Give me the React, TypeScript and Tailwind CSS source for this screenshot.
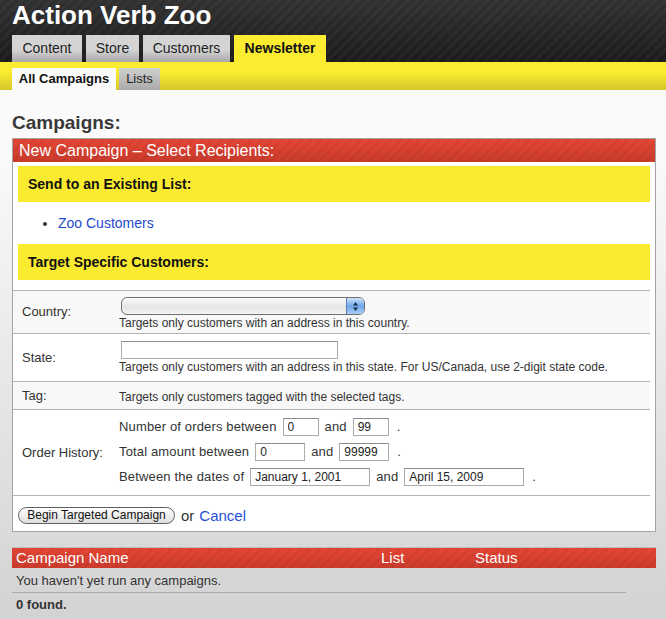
import React from 'react';

const tabs = [
  { label: 'Content', width: 'w-[70px]' },
  { label: 'Store', width: 'w-[53px]' },
  { label: 'Customers', width: 'w-[87px]' },
];

function TextBox({ value, width }: { value: string; width: string }) {
  return (
    <input
      readOnly
      defaultValue={value}
      className={`${width} h-[18px] border border-[#ababab] border-t-[#8c8c8c] bg-white px-[4px] text-[12px] tracking-normal text-[#222] outline-none`}
    />
  );
}

function FakeSelect() {
  return (
    <div className="ml-[2px] flex h-[18px] w-[244px] justify-end overflow-hidden rounded-[6px] border border-[#6f6f6f] bg-[linear-gradient(#fdfdfd,#e4e4e4_55%,#f4f4f4)]">
      <div className="flex w-[18px] items-center justify-center border-l border-[#5a80b8] bg-[linear-gradient(#cfe3fa,#6ea6ea_50%,#a9cdf6)]">
        <svg width="7" height="11" viewBox="0 0 7 11">
          <path d="M3.5 1 L6 4.5 L1 4.5 Z" fill="#1b2a44" />
          <path d="M3.5 10 L6 6.5 L1 6.5 Z" fill="#1b2a44" />
        </svg>
      </div>
    </div>
  );
}

export default function App() {
  return (
    <div className="min-h-[619px] bg-[linear-gradient(#fafafa_25%,#d3d3d3)] font-['Liberation_Sans',Arial,sans-serif] text-[#333]">
      {/* top bar */}
      <header className="flex h-[62px] flex-col bg-[repeating-linear-gradient(135deg,rgba(255,255,255,0.03)_0px,rgba(255,255,255,0.03)_3px,transparent_3px,transparent_7px),linear-gradient(#313131,#1b1b1b)] px-3">
        <div className="h-[35px] pt-[2px] text-[26px] font-bold leading-[26px] text-white">
          Action Verb Zoo
        </div>
        <nav className="flex h-[27px] gap-[4px]">
          {tabs.map((t) => (
            <div
              key={t.label}
              className={`${t.width} flex items-center justify-center bg-[linear-gradient(#d4d4d4_55%,#a8a8a8)] text-[14px] text-[#222]`}
            >
              {t.label}
            </div>
          ))}
          <div className="flex w-[92px] items-center justify-center bg-[#fbec31] text-[14px] font-bold text-[#111]">
            Newsletter
          </div>
        </nav>
      </header>

      <div className="flex h-[28px] items-end gap-[3px] bg-[linear-gradient(#fbec31_35%,#d6c62a)] px-3">
        <div className="flex h-[22px] w-[104px] items-center justify-center bg-[#fafafa] text-[13px] font-bold text-[#111]">
          All Campaigns
        </div>
        <div className="flex h-[22px] w-[41px] items-center justify-center bg-[linear-gradient(#d0d0d0,#a9a9a9)] text-[13px] text-[#222]">
          Lists
        </div>
      </div>

      <main className="pl-3 pr-[10px]">
        <h2 className="mt-[22px] mb-[4px] text-[19px] font-bold leading-[22px] text-[#383838]">
          Campaigns:
        </h2>

        <div className="border border-[#a3a3a3] bg-white">
          <div className="flex h-[23px] items-center bg-[repeating-linear-gradient(135deg,rgba(0,0,0,0.045)_0px,rgba(0,0,0,0.045)_3px,transparent_3px,transparent_7px),linear-gradient(#e54634,#c93b2c)] pl-[6px] text-[16px] text-white">
            New Campaign – Select Recipients:
          </div>

          <div className="mx-[5px]">
            <div className="mt-[4px] flex h-[36px] items-center bg-[#faeb30] pl-[10px] text-[14px] font-bold text-[#111]">
              Send to an Existing List:
            </div>
            <ul className="my-[12px] list-disc pl-[40px] text-[14px] leading-[18px]">
              <li>
                <a href="#" className="text-[#2449cf]">
                  Zoo Customers
                </a>
              </li>
            </ul>
            <div className="flex h-[36px] items-center bg-[#faeb30] pl-[10px] text-[14px] font-bold text-[#111]">
              Target Specific Customers:
            </div>
          </div>

          <div className="mt-[10px] mr-[5px] border-t border-[#b3b3b3] text-[13px]">
            <div className="flex border-b border-[#b3b3b3] bg-[#f8f8f8]">
              <div className="flex w-[106px] items-center pl-[9px]">Country:</div>
              <div className="pt-[6px] pb-[3px]">
                <FakeSelect />
                <div className="mt-[1px] text-[12px] leading-[14px]">
                  Targets only customers with an address in this country.
                </div>
              </div>
            </div>

            <div className="flex border-b border-[#b3b3b3] bg-white">
              <div className="flex w-[106px] items-center pl-[9px]">State:</div>
              <div className="pt-[7px] pb-[7px]">
                <div className="ml-[2px] flex">
                  <TextBox value="" width="w-[217px]" />
                </div>
                <div className="mt-[1px] text-[12px] leading-[14px]">
                  Targets only customers with an address in this state. For US/Canada, use 2-digit state code.
                </div>
              </div>
            </div>

            <div className="flex h-[28px] border-b border-[#b3b3b3] bg-[#f8f8f8]">
              <div className="flex w-[106px] items-center pl-[9px]">Tag:</div>
              <div className="flex items-center pt-[3px] text-[12px]">
                Targets only customers tagged with the selected tags.
              </div>
            </div>

            <div className="flex border-b border-[#b3b3b3] bg-white">
              <div className="flex w-[106px] items-center pl-[9px]">Order History:</div>
              <div className="flex flex-col gap-[7px] pt-[8px] pb-[9px] tracking-[0.15px]">
                <div className="flex h-[18px] items-center gap-[6px]">
                  <span>Number of orders between</span>
                  <TextBox value="0" width="w-[36px]" />
                  <span>and</span>
                  <TextBox value="99" width="w-[36px]" />
                  <span className="ml-[2px]">.</span>
                </div>
                <div className="flex h-[18px] items-center gap-[6px]">
                  <span>Total amount between</span>
                  <TextBox value="0" width="w-[50px]" />
                  <span>and</span>
                  <TextBox value="99999" width="w-[50px]" />
                  <span className="ml-[2px]">.</span>
                </div>
                <div className="flex h-[18px] items-center gap-[6px]">
                  <span>Between the dates of</span>
                  <TextBox value="January 1, 2001" width="w-[120px]" />
                  <span>and</span>
                  <TextBox value="April 15, 2009" width="w-[120px]" />
                  <span className="ml-[2px]">.</span>
                </div>
              </div>
            </div>
          </div>

          <div className="flex h-[35px] items-center pt-[4px] pl-[5px]">
            <button className="h-[17px] w-[157px] rounded-full border border-[#5e5e5e] bg-[linear-gradient(#ffffff,#dedede)] text-[12px] leading-[15px] text-[#111]">
              Begin Targeted Campaign
            </button>
            <span className="ml-[6px] text-[15px] leading-[17px] text-[#333]">or</span>
            <a href="#" className="ml-[5px] text-[15px] leading-[17px] text-[#1f4fd6]">
              Cancel
            </a>
          </div>
        </div>

        <div className="mt-[15px] border-t border-[#bdbdbd]">
          <div className="flex h-[20px] items-center bg-[repeating-linear-gradient(135deg,rgba(0,0,0,0.045)_0px,rgba(0,0,0,0.045)_3px,transparent_3px,transparent_7px),linear-gradient(#e54634,#cc3c2d)] text-[15px] text-white">
            <div className="w-[369px] pl-[4px]">Campaign Name</div>
            <div className="w-[94px]">List</div>
            <div>Status</div>
          </div>
          <div className="flex h-[25px] w-[614px] items-center border-b border-[#a9a9a9] pt-[2px] pl-[4px] text-[13px] text-[#333]">
            You haven't yet run any campaigns.
          </div>
          <div className="flex h-[24px] items-center pl-[4px] text-[13px] font-bold text-[#333]">
            0 found.
          </div>
        </div>
      </main>
    </div>
  );
}
